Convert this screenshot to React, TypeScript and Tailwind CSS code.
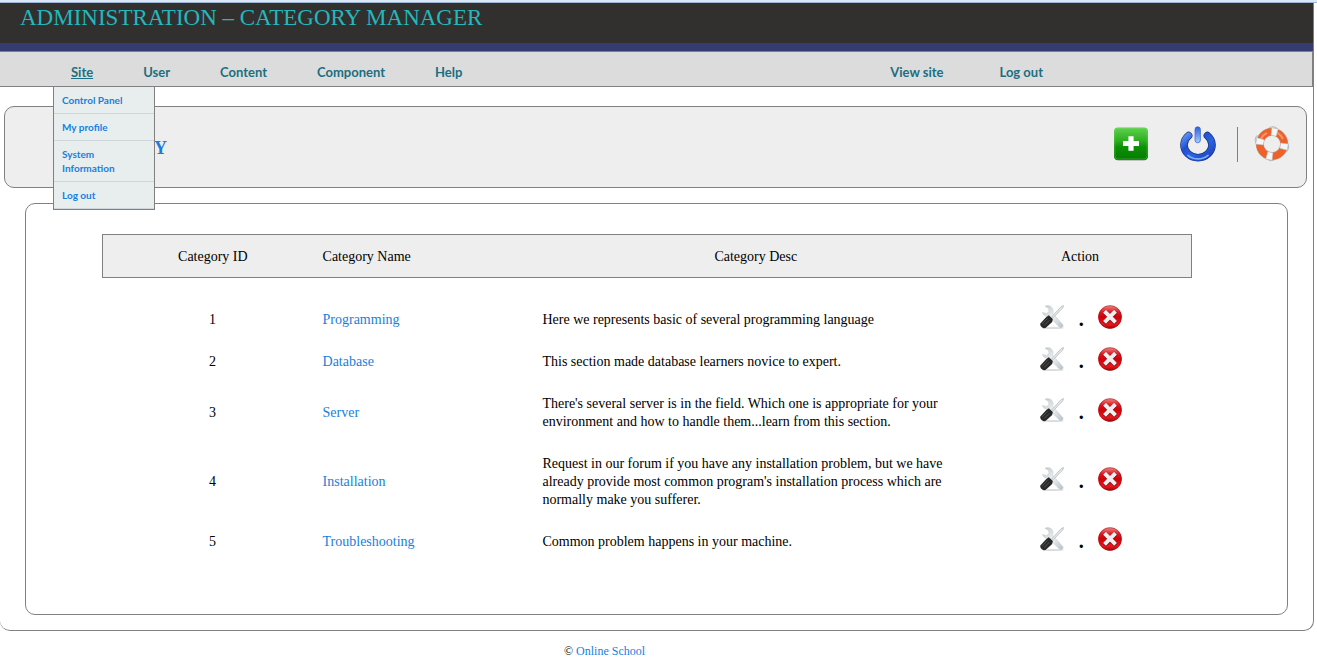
import React from "react";

type Category = { id: number; name: string; desc: string };

const categories: Category[] = [
  { id: 1, name: "Programming", desc: "Here we represents basic of several programming language" },
  { id: 2, name: "Database", desc: "This section made database learners novice to expert." },
  {
    id: 3,
    name: "Server",
    desc: "There's several server is in the field. Which one is appropriate for your environment and how to handle them...learn from this section.",
  },
  {
    id: 4,
    name: "Installation",
    desc: "Request in our forum if you have any installation problem, but we have already provide most common program's installation process which are normally make you sufferer.",
  },
  { id: 5, name: "Troubleshooting", desc: "Common problem happens in your machine." },
];

const siteMenu = ["Control Panel", "My profile", "System Information", "Log out"];

function Gradients() {
  return (
    <svg className="absolute size-0" aria-hidden="true">
      <defs>
        <linearGradient id="green" x1="0" y1="0" x2="0" y2="1">
          <stop offset="0" stopColor="#5fd24f" />
          <stop offset="0.4" stopColor="#2fae22" />
          <stop offset="0.6" stopColor="#0c9206" />
          <stop offset="1" stopColor="#067a02" />
        </linearGradient>
        <linearGradient id="blue" x1="0" y1="0" x2="1" y2="1">
          <stop offset="0" stopColor="#5c93f6" />
          <stop offset="0.3" stopColor="#1f4fd0" />
          <stop offset="0.6" stopColor="#2a62e0" />
          <stop offset="1" stopColor="#1a3fb8" />
        </linearGradient>
        <linearGradient id="bar" x1="0" y1="0" x2="0" y2="1">
          <stop offset="0" stopColor="#2b5fe0" />
          <stop offset="1" stopColor="#a9cdfb" />
        </linearGradient>
        <linearGradient id="red" x1="0" y1="0" x2="0" y2="1">
          <stop offset="0" stopColor="#ee8a8a" />
          <stop offset="0.3" stopColor="#dc1820" />
          <stop offset="0.5" stopColor="#cf0009" />
          <stop offset="0.8" stopColor="#ea1820" />
          <stop offset="1" stopColor="#9c0408" />
        </linearGradient>
        <linearGradient id="steel" x1="0" y1="0" x2="1" y2="1">
          <stop offset="0" stopColor="#b9c2c6" />
          <stop offset="0.5" stopColor="#eef2f3" />
          <stop offset="1" stopColor="#b4c0c5" />
        </linearGradient>
      </defs>
    </svg>
  );
}

function AddIcon() {
  return (
    <svg viewBox="0 0 34 34" className="size-[34px]" aria-hidden="true">
      <rect x="0.5" y="1.5" width="33" height="32" rx="4" fill="#8f9a8f" />
      <rect x="0" y="0.5" width="34" height="32.4" rx="4" fill="url(#green)" />
      <rect x="0.9" y="1.4" width="32.2" height="30.6" rx="3.2" fill="none" stroke="#7fe070" strokeOpacity="0.35" />
      <path d="M14.4 9.3h5.200v4.800h5.400v4.800h-5.400v4.800h-5.200v-4.800H9v-4.800h5.400z" fill="#fff" />
    </svg>
  );
}

function PowerIcon() {
  return (
    <svg viewBox="0 0 36 36" className="size-9" aria-hidden="true">
      <path d="M8.600 9.600A14 12.700 0 1 0 27.400 9.600" fill="none" stroke="#17246b" strokeWidth="7.600" strokeLinecap="round" />
      <path d="M8.600 9.600A14 12.700 0 1 0 27.400 9.600" fill="none" stroke="url(#blue)" strokeWidth="6.400" strokeLinecap="round" />
      <path d="M8 29.400A15 14 0 0 0 28 29.400" fill="none" stroke="#79adfb" strokeWidth="1.800" strokeLinecap="round" />
      <rect x="14" y="0" width="7.400" height="18" rx="3.700" fill="#eeeeee" />
      <rect x="15" y="0.800" width="5.400" height="16" rx="2.700" fill="url(#bar)" stroke="#2d5bd6" strokeWidth="0.700" />
    </svg>
  );
}

function LifebuoyIcon() {
  return (
    <svg viewBox="0 0 36 36" className="size-9" aria-hidden="true">
      <path
        d="M15 2.200c2-2.400 7.600-2 8.600 1.800M2.400 18c-2-2.600-1.400-7 1-8.600M33.600 17.400c2 3 .8 7.600-2 8.600M20.500 33.600c-2.600 2-7 .8-8.600-1.800"
        fill="none"
        stroke="#b3bec5"
        strokeWidth="1.100"
      />
      <circle cx="18" cy="18" r="12.200" fill="none" stroke="#b9a49b" strokeWidth="8" />
      <circle cx="18" cy="18" r="12.200" fill="none" stroke="#ee6128" strokeWidth="7" />
      <path d="M7 12.800A12.400 12.400 0 0 1 13 6.800M23.400 6.800A12.400 12.400 0 0 1 29 13" fill="none" stroke="#f8946a" strokeWidth="2" />
      <g transform="rotate(11 18 18)" fill="#f3f6f7" stroke="#b9c0c4" strokeWidth="0.500">
        <path d="M14.800 2h6.400l-.6 7.600h-5.200z" />
        <path d="M14.800 34h6.400l-.6-7.600h-5.200z" />
        <path d="M2 14.800v6.400l7.600-.6v-5.200z" />
        <path d="M34 14.800v6.400l-7.600-.6v-5.200z" />
      </g>
    </svg>
  );
}

function ToolsIcon() {
  return (
    <svg viewBox="0 0 24 24" className="size-6" aria-hidden="true">
      <ellipse cx="13" cy="23" rx="11" ry="0.9" fill="#dcdcdc" />
      <path
        d="M5 1.200C7.600-.2 10.400.6 12 2.600c1.300 1.700 1.400 3.800.6 5.600l10.200 11.400c.8 1-.2 3-1.600 3.200-.8.100-1.400-.2-1.900-.8L9 11.400C6 11.800 3.300 10.300 2.400 7.400l4.200 1.200L9 6.600 8.600 3.600z"
        fill="url(#steel)"
        stroke="#c3cbce"
        strokeWidth="0.500"
      />
      <path d="M11.800 11.700L21.200 1.600 23.600.5 22.800 2.900 13.200 12.800z" fill="#e4e8ea" stroke="#a3acb0" strokeWidth="0.600" />
      <path d="M8.800 10.200l4 3.900-.6 3-6.700 6c-2.400.9-5.800-2.100-5.200-4.500l6-6.600z" fill="#2a2a2a" />
      <path d="M7.400 13.400l-5.200 5.600M9.200 15.400l-4.900 5" stroke="#5c5c5c" strokeWidth="0.800" />
    </svg>
  );
}

function DeleteIcon() {
  return (
    <svg viewBox="0 0 24 24" className="size-6" aria-hidden="true">
      <circle cx="12" cy="12" r="11.800" fill="url(#red)" />
      <circle cx="12" cy="12" r="11.300" fill="none" stroke="#8c1518" strokeOpacity="0.400" />
      <path d="M7.800 8l8.400 8.400M16.200 8l-8.400 8.400" stroke="#8d0a0d" strokeWidth="4.800" strokeLinecap="square" />
      <path d="M7.900 7.700l8.200 8.200M16.100 7.700l-8.200 8.200" stroke="#efefef" strokeWidth="4" strokeLinecap="square" />
    </svg>
  );
}

export default function App() {
  return (
    <div className="bg-white font-['Liberation_Serif',serif] text-sm leading-[18px] text-black">
      <Gradients />
      <div className="h-[3px] border-b border-[#9fb6d3] bg-[#dbe8f8]" />
      <div className="mr-[3px] rounded-b-[10px] border-r border-b border-[#808080] pb-[15px]">
        <header className="h-12 border-b-8 border-[#363c70] bg-[#32302e] pl-5">
          <h1 className="text-[23px] leading-[30px] text-[#22b8bd]">ADMINISTRATION – CATEGORY MANAGER</h1>
        </header>

        <nav className="flex h-9 items-center justify-between border-y border-r border-[#808080] bg-[#dcdcdc] pt-1.5 pr-[269px] pl-[71px] font-['Lato',sans-serif] text-[13px] leading-4 font-bold text-[#1b6f80]">
          <ul className="flex gap-[50px]">
            <li className="relative">
              <a href="#site" className="underline">Site</a>
              <ul className="absolute top-[22px] -left-[18px] z-10 w-[102px] border border-[#808080] bg-[#e8eeee] text-[10px] leading-[14px] text-[#177fe0]">
                {siteMenu.map((item) => (
                  <li key={item} className="border-b border-[#ced6d9]">
                    <a href="#menu" className="block py-1.5 pr-6 pl-2">{item}</a>
                  </li>
                ))}
              </ul>
            </li>
            <li><a href="#user">User</a></li>
            <li><a href="#content">Content</a></li>
            <li><a href="#component">Component</a></li>
            <li><a href="#help">Help</a></li>
          </ul>
          <ul className="flex gap-14">
            <li><a href="#view">View site</a></li>
            <li><a href="#logout">Log out</a></li>
          </ul>
        </nav>

        <section className="mt-[19px] mr-1.5 ml-1 flex h-[82px] items-center justify-between rounded-[10px] border border-[#808080] bg-[#eeeeee] pr-4 pb-1.5 pl-[60px]">
          <h2 className="pt-2 text-lg font-bold text-[#177fe0]">CATEGORY</h2>
          <div className="flex items-center">
            <button type="button" aria-label="Add category"><AddIcon /></button>
            <button type="button" aria-label="Close" className="ml-8"><PowerIcon /></button>
            <div className="ml-[21px] h-[35px] w-px bg-[#808080]" />
            <button type="button" aria-label="Help" className="ml-4"><LifebuoyIcon /></button>
          </div>
        </section>

        <main className="mt-[15px] mr-[25px] ml-[25px] rounded-[10px] border border-[#808080] pt-[30px] pr-[7.25%] pb-[51px] pl-[5.8%]">
          <table className="w-full table-fixed border-collapse">
            <colgroup>
              <col className="w-[20.2%]" />
              <col className="w-[20.2%]" />
              <col className="w-[39.2%]" />
              <col />
            </colgroup>
            <thead>
              <tr className="h-[43px] border border-[#808080] bg-[#eeeeee]">
                <th className="pt-0.5 font-normal">Category ID</th>
                <th className="pt-0.5 text-left font-normal">Category Name</th>
                <th className="pt-0.5 font-normal">Category Desc</th>
                <th className="pt-0.5 font-normal">Action</th>
              </tr>
            </thead>
            <tbody>
              <tr aria-hidden="true" className="h-[21px]"><td colSpan={4} /></tr>
              {categories.map((c) => (
                <tr key={c.id}>
                  <td className="text-center">{c.id}</td>
                  <td><a href="#category" className="text-[#177fe0]">{c.name}</a></td>
                  <td className="py-3 pr-6">{c.desc}</td>
                  <td>
                    <div className="-mt-1.5 flex items-center justify-center pl-0.5">
                      <button type="button" aria-label={"Edit " + c.name}><ToolsIcon /></button>
                      <span className="w-[34px] pt-1 text-center text-xl leading-5 font-bold">.</span>
                      <button type="button" aria-label={"Delete " + c.name}><DeleteIcon /></button>
                    </div>
                  </td>
                </tr>
              ))}
            </tbody>
          </table>
        </main>
      </div>

      <footer className="mt-[11px] pr-[108px] text-center text-xs leading-[18px]">
        © <a href="#home" className="text-[#177fe0]">Online School</a>
      </footer>
    </div>
  );
}
